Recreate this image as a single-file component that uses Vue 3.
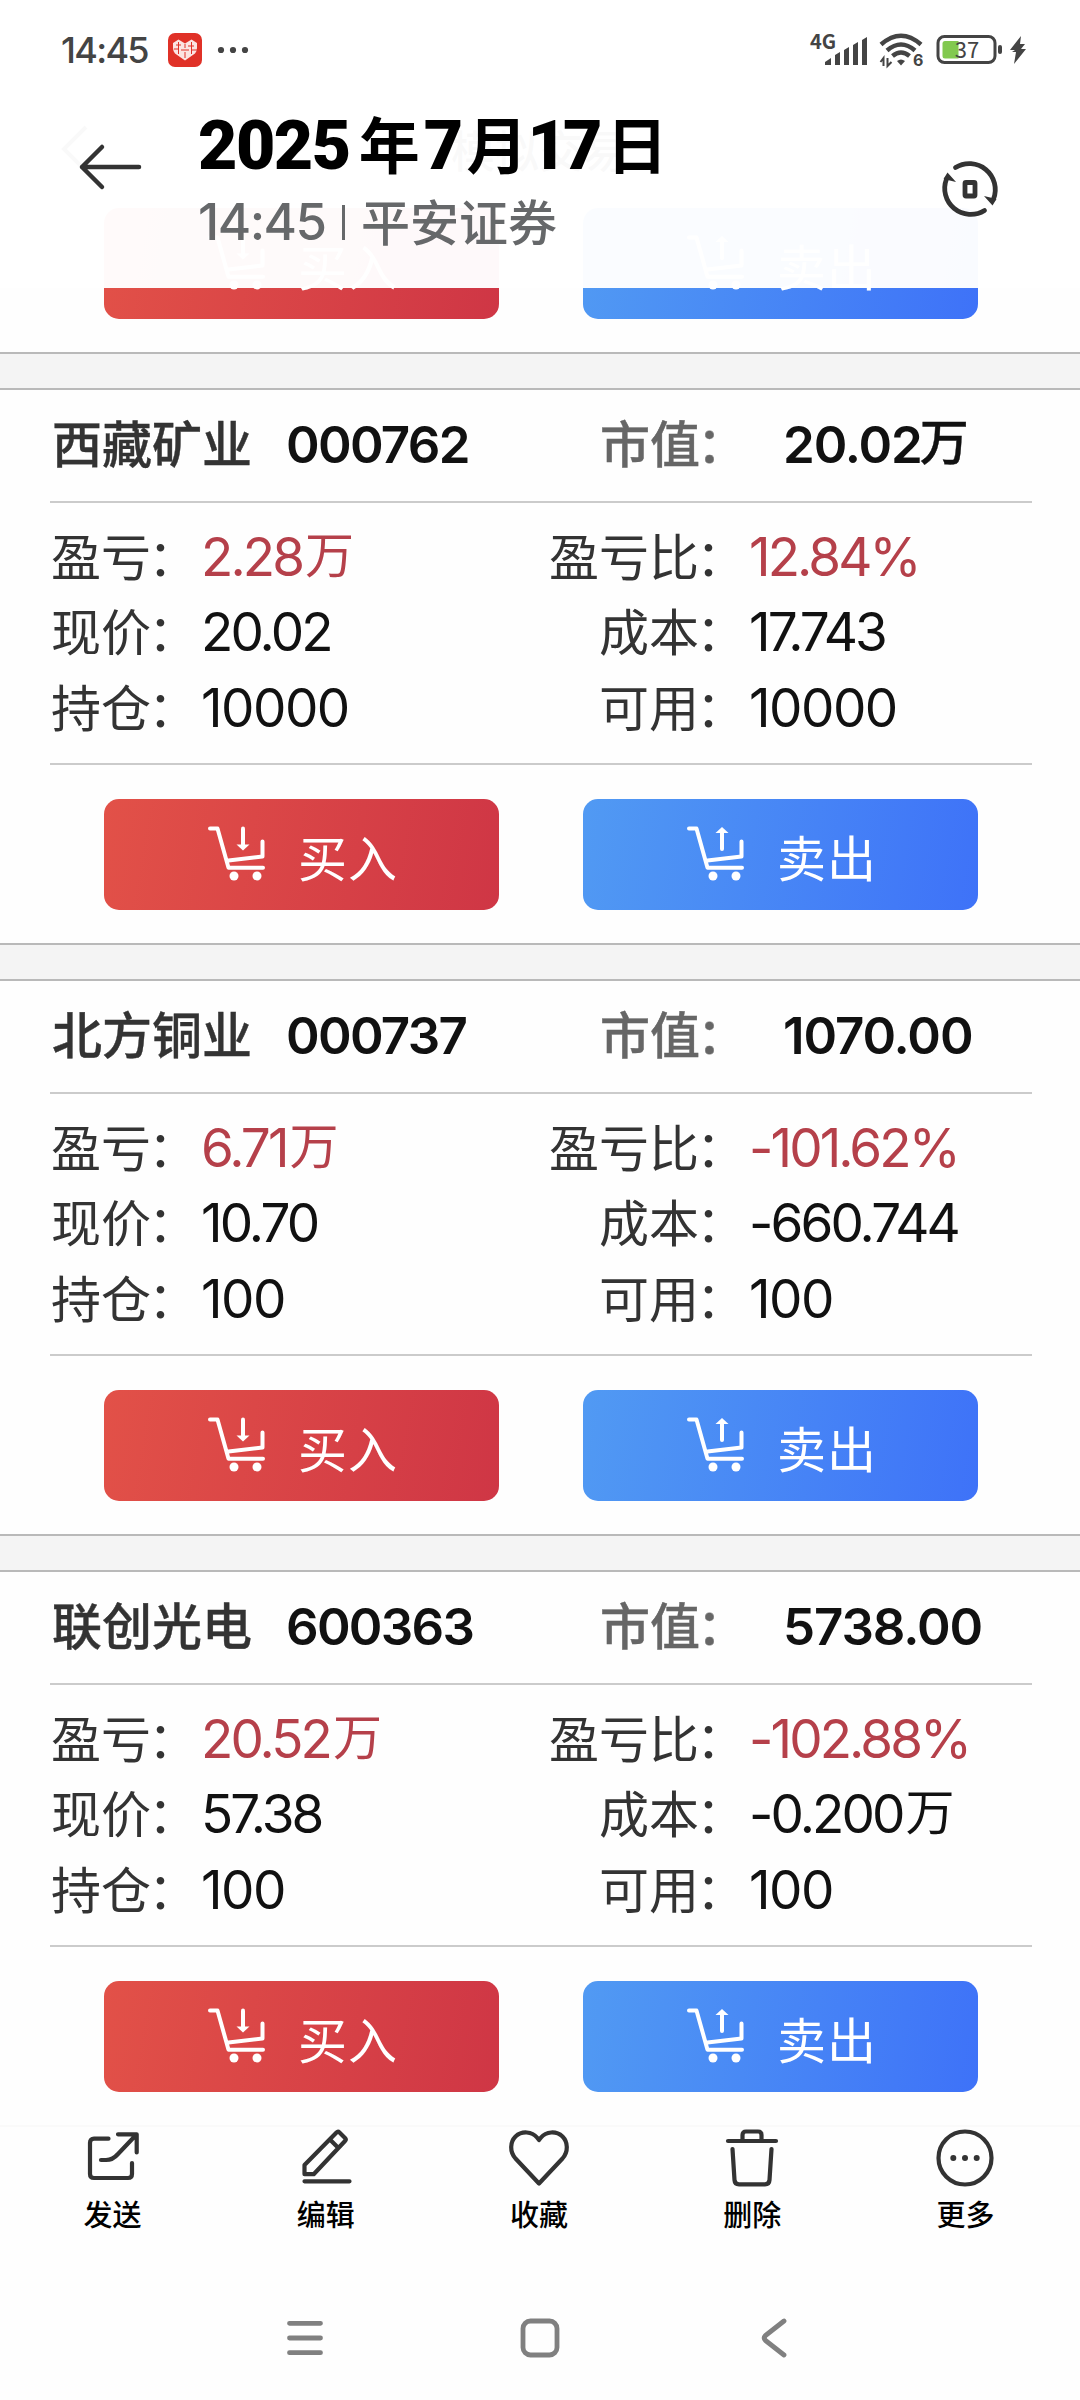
<template>
  <div class="page">
    <main class="list">
      <div class="under-bar">
        <svg class="under-back" viewBox="0 0 30 50">
          <path d="M26 3L4 25l22 22" />
        </svg>
        <span class="under-title">模拟交易</span>
      </div>
      <div class="actions">
        <div v-for="btn in buttons" :key="btn.text" class="btn" :class="btn.type">
          <svg class="cart" viewBox="0 0 58 56">
            <path class="line" :d="cartPath" />
            <path class="line" :d="btn.stem" />
            <path :d="btn.arrow" />
            <circle cx="26" cy="50" r="4.5" />
            <circle cx="49" cy="50" r="4.5" />
          </svg>
          <span>{{ btn.text }}</span>
        </div>
      </div>

      <section v-for="item in stocks" :key="item.code" class="stock">
        <div class="gap"></div>
        <div class="head">
          <span class="name">{{ item.name }}</span>
          <span class="num code">{{ item.code }}</span>
          <span class="cap">市值<em>：</em></span>
          <span class="num total">{{ item.total }}<i v-if="item.totalUnit">{{ item.totalUnit }}</i></span>
        </div>
        <div class="rows">
          <div v-for="row in item.rows" :key="row[0]" class="row" :class="{ red: row[0] === '盈亏' }">
            <span class="label">{{ row[0] }}<em>：</em></span>
            <span class="num value" :class="{ decimal: row[1].includes('.') }">{{ row[1] }}<i v-if="row[2]">{{ row[2] }}</i></span>
            <span class="label right">{{ row[3] }}<em>：</em></span>
            <span class="num value" :class="{ decimal: row[4].includes('.') }">{{ row[4] }}<i v-if="row[5]">{{ row[5] }}</i></span>
          </div>
        </div>
        <div class="actions">
          <div v-for="btn in buttons" :key="btn.text" class="btn" :class="btn.type">
            <svg class="cart" viewBox="0 0 58 56">
              <path class="line" :d="cartPath" />
              <path class="line" :d="btn.stem" />
              <path :d="btn.arrow" />
              <circle cx="26" cy="50" r="4.5" />
              <circle cx="49" cy="50" r="4.5" />
            </svg>
            <span>{{ btn.text }}</span>
          </div>
        </div>
      </section>
    </main>

    <header class="header">
      <div class="status">
        <span class="clock">14:45</span>
        <svg class="app-icon" viewBox="0 0 34 34">
          <rect width="34" height="34" rx="7" fill="#e03127" />
          <path d="M17 27.500L7 20.500Q5 18.500 5 15V10L10.500 6.500L17 10.500L23.500 6.500L29 10V15Q29 18.500 27 20.500Z" fill="#fbe4e2" />
          <path d="M8 12h5M10.500 9v12M17 11v4M13 17h8M17 19v6M20 13h6M23.500 9v12M6 16h4M24 17h5" stroke="#e03127" stroke-width="1" fill="none" />
        </svg>
        <svg class="dots" viewBox="0 0 32 8">
          <circle cx="4" cy="4" r="3.100" />
          <circle cx="16" cy="4" r="3.100" />
          <circle cx="28" cy="4" r="3.100" />
        </svg>
        <svg class="signal" viewBox="0 0 58 34">
          <text x="0" y="16" class="net">4G</text>
          <path d="M15 32v-3l6-4v7zM25 32V22l5-3v13zM34 32V17l5-3v18zM43 32V12l5-3v23zM52 32V7l5-3v28z" />
        </svg>
        <svg class="wifi" viewBox="0 0 44 36">
          <path class="arc" d="M2 12.500Q22-5 42 12.500M8 18.500Q22 6.500 36 18.500M13.500 24Q22 17 30.500 24" />
          <path d="M18 29q4-3 8 0l-4 4.500z" />
          <path class="thin" d="M4.500 34v-8l-3 4M8.500 26v8l4-4" />
          <text x="34" y="34" class="six">6</text>
        </svg>
        <svg class="battery" viewBox="0 0 68 32">
          <rect x="2" y="2.500" width="57" height="26" rx="6.500" fill="none" stroke="#444" stroke-width="3" />
          <path d="M9 7h13.500v17.500H9q-2.500 0-2.500-2.500V9.500Q6.500 7 9 7z" fill="#82c94f" />
          <rect x="62" y="11" width="4" height="9" rx="2" fill="#444" />
          <text x="31" y="23.500" text-anchor="middle" class="level">37</text>
        </svg>
        <svg class="bolt" viewBox="0 0 18 30">
          <path d="M12 1L1 15h5l-3 2h4L5 29 17 14h-5l4-5h-5z" />
        </svg>
      </div>
      <div class="title-bar">
        <svg class="back" viewBox="0 0 64 46">
          <path d="M60 23H3M23 3L3 23l20 20" />
        </svg>
        <div class="titles">
          <h1><b>2025</b>年<b>7</b>月<b class="day">17</b>日</h1>
          <p><span class="time">14:45</span><span class="bar"></span><span class="source">平安证券</span></p>
        </div>
        <svg class="rotate" viewBox="0 0 60 60">
          <path class="line" d="M15.500 8.500A26 26 0 0 1 53.500 40" />
          <path class="line" d="M44.500 51.500A26 26 0 0 1 6.500 20" />
          <path d="M44 37l12.500 3L52.500 46.500zM16 23L3.500 20L7.500 13.500z" />
          <rect class="line" x="25" y="23.500" width="10" height="13.500" rx="1" />
        </svg>
      </div>
    </header>

    <footer class="footer">
      <nav class="tools">
        <div v-for="tool in tools" :key="tool.text" class="tool">
          <svg viewBox="0 0 60 60">
            <path :d="tool.path" />
            <g v-if="tool.dots" class="fill">
              <circle cx="18.300" cy="29" r="3" />
              <circle cx="30" cy="29" r="3" />
              <circle cx="41.700" cy="29" r="3" />
            </g>
          </svg>
          <span>{{ tool.text }}</span>
        </div>
      </nav>
      <nav class="system">
        <svg viewBox="0 0 44 44"><path d="M6.500 7.300h31M6.500 22h31M6.500 36.700h31" /></svg>
        <svg viewBox="0 0 44 44"><rect x="5" y="5" width="34" height="34" rx="7.500" /></svg>
        <svg viewBox="0 0 44 44"><path d="M31 5L12.500 19.500q-2.500 2.500 0 5L31 39" /></svg>
      </nav>
    </footer>
  </div>
</template>

<script setup>
const cartPath = 'M2 2.500h7.500L20.500 41.700H55M20.500 34.500l34-4V15.500'

const buttons = [
  { type: 'buy', text: '买入', stem: 'M35 2.500V19', arrow: 'M28.500 18.500h13L35 24.500z' },
  { type: 'sell', text: '卖出', stem: 'M35 6V23', arrow: 'M28.500 7h13L35 1z' }
]

// row: label, value, unit, label, value, unit
const stocks = [
  {
    name: '西藏矿业',
    code: '000762',
    total: '20.02',
    totalUnit: '万',
    rows: [
      ['盈亏', '2.28', '万', '盈亏比', '12.84%'],
      ['现价', '20.02', '', '成本', '17.743'],
      ['持仓', '10000', '', '可用', '10000']
    ]
  },
  {
    name: '北方铜业',
    code: '000737',
    total: '1070.00',
    rows: [
      ['盈亏', '6.71', '万', '盈亏比', '-101.62%'],
      ['现价', '10.70', '', '成本', '-660.744'],
      ['持仓', '100', '', '可用', '100']
    ]
  },
  {
    name: '联创光电',
    code: '600363',
    total: '5738.00',
    rows: [
      ['盈亏', '20.52', '万', '盈亏比', '-102.88%'],
      ['现价', '57.38', '', '成本', '-0.200', '万'],
      ['持仓', '100', '', '可用', '100']
    ]
  }
]

const tools = [
  {
    text: '发送',
    path: 'M25.500 9.700H11q-4 0-4 4V45q0 4 4 4h34q4 0 4-4V34M18 31h5c5 0 8.500-2 12-6L53.500 5.500M35 5.300h18.700V23.500'
  },
  {
    text: '编辑',
    path: 'M8.500 45.200V36L40.500 3.500q1.500-1.500 3 0l5.500 5.500q1.500 1.500 0 3L17.700 45.200zM33.900 10.500l8.500 8.500M8.500 52.300h45'
  },
  {
    text: '收藏',
    path: 'M30 54.500L6.500 29.500C.5 22.500 1 13 6.500 7.500C13 1.500 23 2.500 28 8.500L30 11L32 8.500C37 2.500 47 1.500 53.500 7.500C59 13 59.500 22.500 53.500 29.500z'
  },
  {
    text: '删除',
    path: 'M6 12h48M20.500 12V6q0-3.500 3.500-3.500h12q3.500 0 3.500 3.500v6M10.500 20l2 31q.3 4.300 4.500 4.300h26q4.200 0 4.500-4.300l2-31'
  },
  { text: '更多', path: 'M30 2.500a26.500 26.500 0 1 1 0 53a26.500 26.500 0 1 1 0-53z', dots: true }
]
</script>

<style>
body {
  background: #fefefe;
}
</style>

<style scoped>
.page {
  position: relative;
  width: 1080px;
  height: 2400px;
  overflow: hidden;
  background: #fefefe;
  font-family: "Noto Sans CJK SC", sans-serif;
  color: #333;
}
svg {
  display: block;
  flex: none;
  overflow: visible;
}
i {
  font-style: normal;
  font-family: "Noto Sans CJK SC", sans-serif;
  font-size: 49px;
  line-height: 0;
  letter-spacing: 0;
  vertical-align: 3px;
  margin-left: 3px;
}
/* the full-width colon sits closer to its label */
em {
  font-style: normal;
  margin: 0 3px 0 -3px;
}
.num {
  font-family: Inter, sans-serif;
  color: #111;
  white-space: nowrap;
}

/* list */
.under-bar {
  display: flex;
  align-items: center;
  box-sizing: border-box;
  height: 174px;
  padding: 124px 0 0 60px;
}
.under-back {
  width: 30px;
  height: 50px;
  fill: none;
  stroke: #333;
  stroke-width: 4;
}
.under-title {
  margin-left: 361px;
  font-size: 44px;
  line-height: 50px;
  font-weight: 500;
}
.actions {
  display: flex;
  gap: 84px;
  box-sizing: border-box;
  height: 178px;
  padding: 34px 0 0 104px;
}
.btn {
  display: flex;
  align-items: center;
  box-sizing: border-box;
  width: 395px;
  height: 110.600px;
  padding-left: 104px;
  border-radius: 15px;
  color: #fff;
  font-size: 49px;
  letter-spacing: 1px;
}
.btn span {
  margin: 2px 0 0 32px;
}
.buy {
  background: linear-gradient(100deg, #e25148, #cf3645);
}
.sell {
  background: linear-gradient(100deg, #519af3, #3e72f8);
}
.cart {
  width: 58px;
  height: 56px;
  fill: #fff;
}
.cart .line {
  fill: none;
  stroke: #fff;
  stroke-width: 4;
  stroke-linecap: round;
  stroke-linejoin: round;
}
.gap {
  box-sizing: border-box;
  height: 38px;
  background: #f4f4f4;
  border: solid #b9b9b9;
  border-width: 2px 0;
}
.head {
  display: flex;
  align-items: center;
  box-sizing: border-box;
  height: 113px;
  margin: 0 48px 0 50px;
  border-bottom: 2px solid #cbcbcb;
  font-size: 50px;
  line-height: 60px;
  font-weight: 500;
}
.name,
.cap {
  padding-bottom: 9px;
  -webkit-text-stroke: 0.400px currentColor;
}
.name {
  width: 234px;
  padding-left: 2px;
}
.head .num {
  padding-bottom: 2px;
  font-size: 51px;
  font-weight: 600;
  letter-spacing: -1.100px;
}
.head i {
  margin-left: -2px;
  font-weight: 500;
  -webkit-text-stroke: 0.400px currentColor;
}
.head .code {
  width: 314px;
  letter-spacing: -1.700px;
}
.cap {
  width: 183px;
  color: #666;
}
.rows {
  box-sizing: border-box;
  height: 262px;
  margin: 0 48px 0 50px;
  padding-top: 16px;
  border-bottom: 2px solid #cbcbcb;
}
.row {
  display: grid;
  grid-template-columns: 151px 346px 202px 1fr;
  align-items: center;
  height: 75.600px;
  font-size: 50px;
  line-height: 60px;
}
.label {
  padding: 0 0 6px 1px;
  white-space: nowrap;
}
.right {
  padding-left: 0;
  text-align: right;
}
.value {
  font-size: 53px;
  letter-spacing: -1.500px;
}
.decimal {
  letter-spacing: -2.900px;
}
.red .value {
  color: #b5404a;
}

/* header */
.header {
  position: absolute;
  top: 0;
  left: 0;
  width: 1080px;
  height: 288px;
  background: rgba(255, 255, 255, 0.972);
}
.status {
  display: flex;
  align-items: center;
  height: 100px;
  padding-left: 61px;
  fill: #444;
}
.clock {
  width: 107px;
  font-family: Inter, sans-serif;
  font-size: 36px;
  font-weight: 500;
  letter-spacing: -1.700px;
  color: #444;
}
.app-icon {
  width: 34px;
  height: 34px;
}
.dots {
  width: 32px;
  height: 8px;
  margin-left: 15px;
}
.signal {
  width: 58px;
  height: 34px;
  margin-left: 561px;
}
.net {
  font: 700 20px "Noto Sans CJK SC", sans-serif;
}
.wifi {
  width: 44px;
  height: 36px;
  margin-left: 11px;
}
.arc {
  fill: none;
  stroke: #444;
  stroke-width: 4.500;
}
.thin {
  fill: none;
  stroke: #444;
  stroke-width: 2;
}
.six {
  font: 700 16px Inter, sans-serif;
}
.battery {
  width: 68px;
  height: 32px;
  margin-left: 13px;
}
.level {
  font: 400 22px "Noto Sans CJK SC", sans-serif;
}
.bolt {
  width: 18px;
  height: 30px;
  margin-left: 5px;
}
.title-bar {
  display: flex;
  align-items: flex-start;
  padding-left: 79px;
}
.back {
  width: 64px;
  height: 46px;
  margin-top: 44px;
  fill: none;
  stroke: #333;
  stroke-width: 4.500;
  stroke-linecap: round;
  stroke-linejoin: round;
}
.titles {
  width: 741px;
  margin-left: 56px;
}
h1 {
  display: flex;
  align-items: baseline;
  height: 83px;
  margin: 0;
  padding-top: 3px;
  font-size: 61px;
  line-height: 80px;
  font-weight: 700;
  color: #000;
}
h1 b {
  margin: 0 5px 0 4px;
  font-family: Roboto, sans-serif;
  font-size: 68px;
  letter-spacing: -1.500px;
}
h1 b:first-child {
  margin: 0 9px 0 -1px;
}
h1 .day {
  margin: 0 8px 0 0;
  letter-spacing: -4px;
}
p {
  display: flex;
  align-items: center;
  margin: 0;
  font-size: 49px;
  line-height: 72px;
  font-weight: 500;
  color: #66686a;
}
.time {
  width: 144px;
  margin-left: -1px;
  font-family: Inter, sans-serif;
  font-size: 51px;
  letter-spacing: -1.500px;
}
.bar {
  width: 3px;
  height: 35px;
  margin-right: 16px;
  background: #66686a;
}
.source {
  margin-top: -5px;
}
.rotate {
  width: 60px;
  height: 60px;
  margin-top: 59px;
  fill: #333;
}
.rotate .line {
  fill: none;
  stroke: #333;
  stroke-width: 4.800;
  stroke-linecap: round;
}

/* footer */
.footer {
  position: absolute;
  top: 2125px;
  left: 0;
  box-sizing: border-box;
  width: 1080px;
  height: 275px;
  border-top: 2px solid #fafafa;
  background: #fefefe;
}
.tools {
  display: flex;
  padding: 2px 8px 0 6px;
}
.tool {
  flex: 1;
  display: flex;
  flex-direction: column;
  align-items: center;
  font-size: 29px;
  line-height: 40px;
  font-weight: 500;
  color: #000;
}
.tool svg {
  width: 60px;
  height: 60px;
  margin-bottom: 4px;
  fill: none;
  stroke: #333;
  stroke-width: 4.200;
  stroke-linecap: round;
  stroke-linejoin: round;
}
.tool .fill {
  fill: #333;
  stroke: none;
}
.system {
  display: flex;
  justify-content: center;
  gap: 191px;
  margin-top: 83px;
}
.system svg {
  width: 44px;
  height: 44px;
  fill: none;
  stroke: #808080;
  stroke-width: 4.800;
  stroke-linecap: round;
  stroke-linejoin: round;
}
</style>
